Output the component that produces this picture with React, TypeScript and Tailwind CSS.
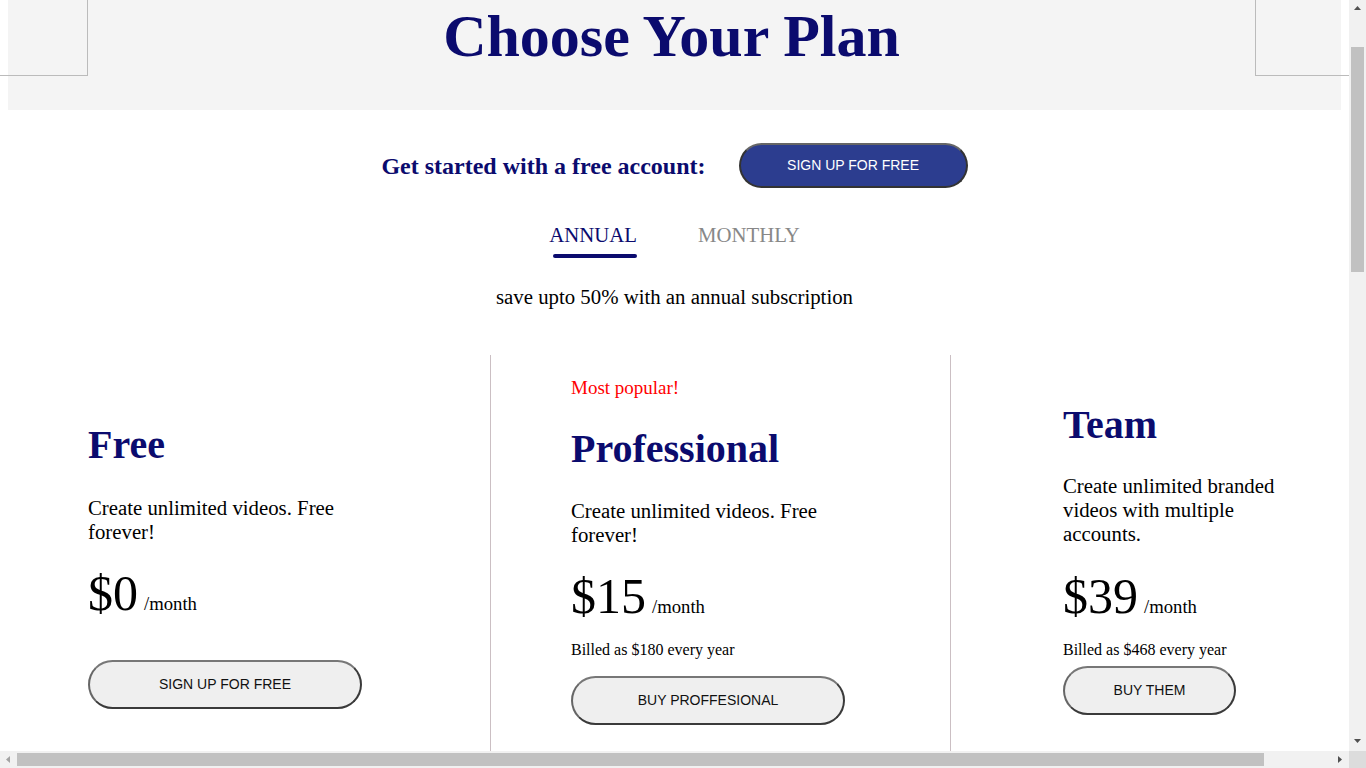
const NAVY = 'text-[#0b0b6e]';

type Plan = {
  name: string;
  badge?: string;
  desc: string;
  price: string;
  billed?: string;
  cta: string;
};

const PLANS: Plan[] = [
  { name: 'Free', desc: 'Create unlimited videos. Free forever!', price: '$0', cta: 'SIGN UP FOR FREE' },
  {
    name: 'Professional',
    badge: 'Most popular!',
    desc: 'Create unlimited videos. Free forever!',
    price: '$15',
    billed: 'Billed as $180 every year',
    cta: 'BUY PROFFESIONAL',
  },
  {
    name: 'Team',
    desc: 'Create unlimited branded videos with multiple accounts.',
    price: '$39',
    billed: 'Billed as $468 every year',
    cta: 'BUY THEM',
  },
];

function PlanButton({ label, wide }: { label: string; wide: boolean }) {
  return (
    <button
      className={`${wide ? 'w-[274px]' : 'w-[173px]'} h-[49px] rounded-full bg-[#efefef] border-2 border-[#3a3a3a] border-t-[#777] border-l-[#666] text-[14px] text-[#111] font-['Liberation_Sans',Arial,sans-serif]`}
    >
      {label}
    </button>
  );
}

function Price({ value }: { value: string }) {
  return (
    <div className="flex items-baseline gap-[6px]">
      <span className="text-[50px] leading-none">{value}</span>
      <span className="text-[18.7px]">/month</span>
    </div>
  );
}

// classic browser scrollbars, drawn over the page
function Scrollbars() {
  return (
    <>
      <div className="fixed right-0 top-0 w-[17px] h-[751px] bg-[#f1f1f1]">
        <svg className="absolute left-[5px] top-[6px]" width="7" height="5" viewBox="0 0 7 5">
          <path d="M3.5 0L7 4H0z" fill="#505050" />
        </svg>
        <div className="absolute left-[2px] top-[47px] w-[13px] h-[225px] bg-[#c1c1c1]" />
        <svg className="absolute left-[5px] top-[739px]" width="7" height="5" viewBox="0 0 7 5">
          <path d="M0 0h7L3.5 4z" fill="#505050" />
        </svg>
      </div>
      <div className="fixed left-0 bottom-0 w-[1349px] h-[17px] bg-[#f1f1f1]">
        <svg className="absolute left-[6px] top-[5px]" width="5" height="7" viewBox="0 0 5 7">
          <path d="M0 3.5L4 0v7z" fill="#a3a3a3" />
        </svg>
        <div className="absolute left-[17px] top-[2px] w-[1247px] h-[13px] bg-[#c1c1c1]" />
        <svg className="absolute left-[1338px] top-[5px]" width="5" height="7" viewBox="0 0 5 7">
          <path d="M0 0l4 3.5L0 7z" fill="#505050" />
        </svg>
      </div>
      <div className="fixed right-0 bottom-0 w-[17px] h-[17px] bg-[#dcdcdc]" />
    </>
  );
}

export default function App() {
  const [free, pro, team] = PLANS;

  return (
    <div className="relative w-[1349px] min-h-screen overflow-hidden bg-white font-['Liberation_Serif','Times_New_Roman',serif] text-black">
      {/* corner decorations */}
      <div className="absolute left-0 top-0 w-[88px] h-[76px] border-r border-b border-[#bbb]" />
      <div className="absolute left-[1255px] top-0 w-[120px] h-[76px] border-l border-b border-[#bbb]" />

      <div className="mx-2">
        <header className="h-[110px] bg-[#f4f4f4] pt-[6px] text-center">
          <h1 className={`-ml-[6px] text-[60px] leading-none font-bold ${NAVY}`}>Choose Your Plan</h1>
        </header>

        <div className="mt-[33px] flex items-center justify-center gap-[33px]">
          <span className={`text-[24px] font-bold ${NAVY}`}>Get started with a free account:</span>
          <button className="w-[229px] h-[45px] rounded-full bg-[#2c3d8f] border-2 border-[#333] border-t-[#666] text-white text-[14px] font-['Liberation_Sans',Arial,sans-serif]">
            SIGN UP FOR FREE
          </button>
        </div>

        <div className="mt-[37px] flex justify-center gap-[61px] text-[20.8px] leading-none">
          <div className="flex flex-col items-center">
            <span className={NAVY}>ANNUAL</span>
            <span className="mt-[8px] ml-[3px] h-[4px] w-[84px] rounded-full bg-[#0b0b6e]" />
          </div>
          <span className="text-[#888]">MONTHLY</span>
        </div>

        <p className="mt-[29px] text-center text-[20.8px] leading-none">save upto 50% with an annual subscription</p>

        <div className="mt-[47px] flex w-[1416px] min-h-[1900px]">
          {/* Free */}
          <div className="w-[482px] pl-[80px] pt-[70px]">
            <h2 className={`text-[40px] leading-none font-bold ${NAVY}`}>{free.name}</h2>
            <p className="mt-[31px] w-[262px] text-[20.8px] leading-6">{free.desc}</p>
            <div className="mt-[24px]">
              <Price value={free.price} />
            </div>
            <div className="mt-[42px]">
              <PlanButton label={free.cta} wide />
            </div>
          </div>

          {/* Professional */}
          <div className="w-[460px] border-l border-[#cbbfc3] pl-[80px] pt-[23px]">
            <p className="text-[19px] leading-none text-[#f00]">{pro.badge}</p>
            <h2 className={`mt-[32px] text-[40px] leading-none font-bold ${NAVY}`}>{pro.name}</h2>
            <p className="mt-[30px] w-[262px] text-[20.8px] leading-6">{pro.desc}</p>
            <div className="mt-[24px]">
              <Price value={pro.price} />
            </div>
            <p className="mt-[21px] text-[16px] leading-none">{pro.billed}</p>
            <div className="mt-[18px]">
              <PlanButton label={pro.cta} wide />
            </div>
          </div>

          {/* Team */}
          <div className="flex-1 border-l border-[#cbbfc3] pl-[112px] pt-[50px]">
            <h2 className={`text-[40px] leading-none font-bold ${NAVY}`}>{team.name}</h2>
            <p className="mt-[29px] w-[240px] text-[20.8px] leading-6">{team.desc}</p>
            <div className="mt-[25px]">
              <Price value={team.price} />
            </div>
            <p className="mt-[21px] text-[16px] leading-none">{team.billed}</p>
            <div className="mt-[8px]">
              <PlanButton label={team.cta} wide={false} />
            </div>
          </div>
        </div>
      </div>

      <Scrollbars />
    </div>
  );
}
